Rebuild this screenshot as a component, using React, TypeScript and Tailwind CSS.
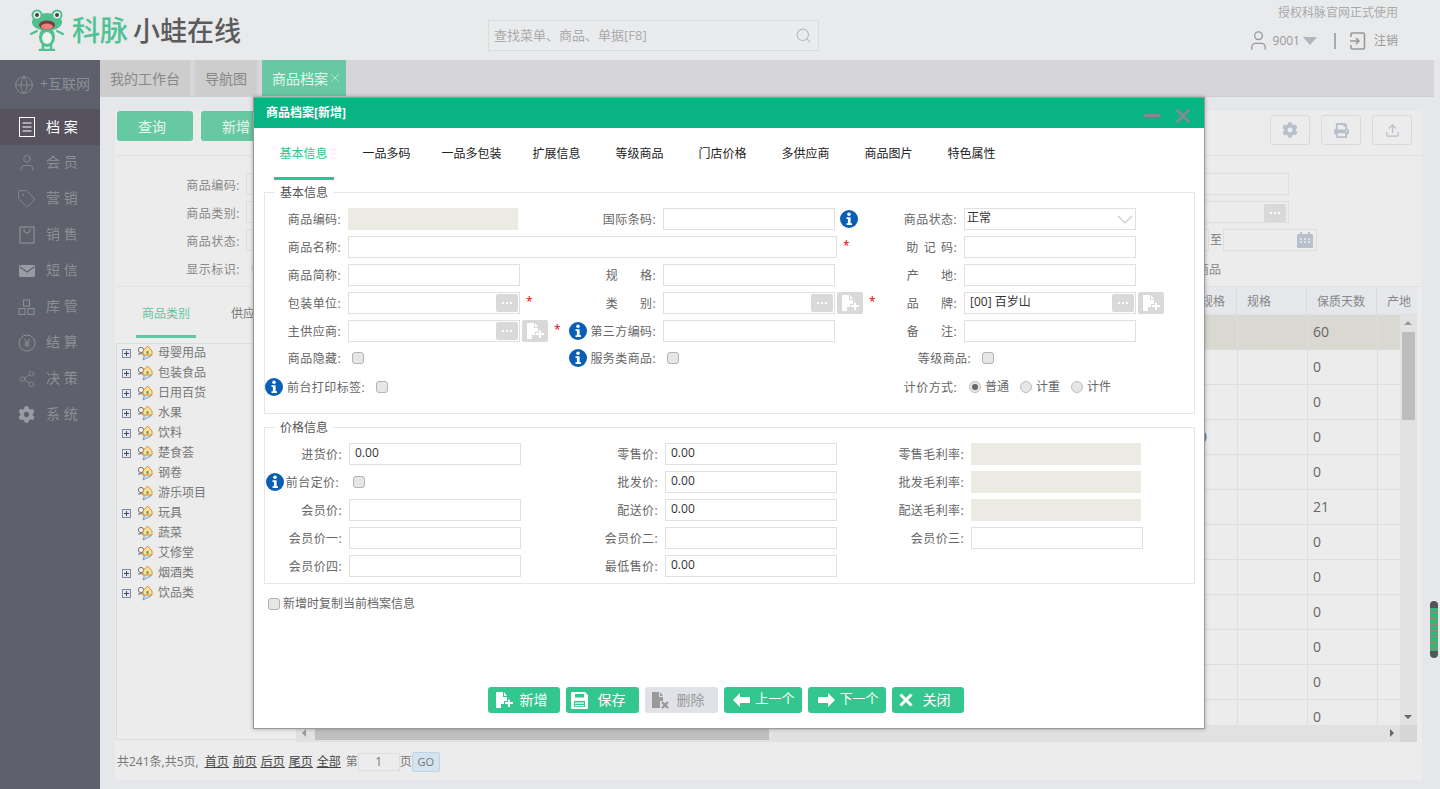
import { FC, ReactNode } from "react";
import { Globe, User, Tag, Share2, Search, Upload, X } from "lucide-react";
import { FaCog, FaPrint } from "react-icons/fa";

const Frog = () => (
  <svg width="34" height="42" viewBox="0 0 34 42">
    <path d="M7 22 L1 25 M27 22 L33 25" stroke="#4fc08f" strokeWidth="2" strokeLinecap="round" />
    <path d="M13 36 L13 41 M21 36 L21 41 M10 41 H16 M18 41 H24" stroke="#4fc08f" strokeWidth="2.5" strokeLinecap="round" />
    <ellipse cx="17" cy="28" rx="8" ry="10" fill="#4fc08f" />
    <ellipse cx="17" cy="29" rx="5" ry="6" fill="#e9f5ef" />
    <ellipse cx="17" cy="13" rx="15" ry="9" fill="#4fc08f" />
    <circle cx="7" cy="6" r="5.5" fill="#4fc08f" />
    <circle cx="27" cy="6" r="5.5" fill="#4fc08f" />
    <circle cx="7" cy="6" r="3.5" fill="#f0f0f0" />
    <circle cx="27" cy="6" r="3.5" fill="#f0f0f0" />
    <circle cx="7" cy="6" r="2" fill="#444" />
    <circle cx="27" cy="6" r="2" fill="#444" />
    <ellipse cx="17" cy="16" rx="8" ry="4.5" fill="#7a3b3b" />
    <ellipse cx="17" cy="17.5" rx="6" ry="3" fill="#ee7f7f" />
  </svg>
);

const Info = () => (
  <svg width="18" height="18" viewBox="0 0 18 18" className="shrink-0">
    <circle cx="9" cy="9" r="9" fill="#0a5fb4" />
    <circle cx="9" cy="4.2" r="1.8" fill="#fff" />
    <path d="M6.5 7.2 H10.6 V13.2 H12 V15 H6.5 V13.2 H7.9 V9 H6.5 Z" fill="#fff" />
  </svg>
);

const FileAdd = ({ color = "#fff" }: { color?: string }) => (
  <svg width="18" height="17" viewBox="0 0 18 17">
    <path d="M1 0 H8 V5 H12 V9 H9 V12 H6 V16 H1 Z M9 0 L12 4 H9 Z" fill={color} />
    <path d="M10 10 H13 V7.5 H15 V10 H18 V12 H15 V15 H13 V12 H10 Z" fill={color} />
  </svg>
);

const FileDel = () => (
  <svg width="18" height="17" viewBox="0 0 18 17">
    <path d="M1 0 H8 V5 H12 V9 H9 V16 H1 Z M9 0 L12 4 H9 Z" fill="#999" />
    <path d="M11 10 L17 16 M17 10 L11 16" stroke="#999" strokeWidth="2.4" />
  </svg>
);

const Floppy = () => (
  <svg width="17" height="17" viewBox="0 0 17 17">
    <path d="M0 1 Q0 0 1 0 H14 L17 3 V16 Q17 17 16 17 H1 Q0 17 0 16 Z" fill="#fff" />
    <rect x="4" y="2" width="9" height="3.5" fill="#33c78f" />
    <rect x="3" y="9" width="11" height="6" fill="#33c78f" />
    <rect x="4" y="10.5" width="9" height="1.2" fill="#fff" />
    <rect x="4" y="13" width="9" height="1.2" fill="#fff" />
  </svg>
);

const ArrowBtn = ({ left }: { left?: boolean }) => (
  <svg width="17" height="14" viewBox="0 0 17 14">
    <path
      d={left ? "M0 7 L7 0 V4 H17 V10 H7 V14 Z" : "M17 7 L10 0 V4 H0 V10 H10 V14 Z"}
      fill="#fff"
    />
  </svg>
);

const Dots = () => (
  <span className="absolute right-[2px] top-[2px] flex h-[18px] w-[22px] items-center justify-center gap-[2px] rounded-[2px] bg-[#d9d9d9]">
    <i className="h-[2px] w-[2px] bg-white" />
    <i className="h-[2px] w-[2px] bg-white" />
    <i className="h-[2px] w-[2px] bg-white" />
  </span>
);

const AddBtn = () => (
  <span className="ml-[2px] flex h-[22px] w-[26px] shrink-0 items-center justify-center rounded-[2px] bg-[#d9d9d9]">
    <FileAdd />
  </span>
);

const Req = () => <span className="mb-[3px] ml-[6px] shrink-0 text-[#e60000]">*</span>;

const Check = ({ className = "" }: { className?: string }) => (
  <input
    type="checkbox"
    className={`h-[12px] w-[12px] appearance-none rounded-[3px] border border-[#b4b4b4] bg-[#e6e6e6] ${className}`}
  />
);

const Radio = ({ on }: { on?: boolean }) => (
  <span className="flex h-[12px] w-[12px] items-center justify-center rounded-full border border-[#bdbdbd] bg-[#e6e6e6]">
    {on && <i className="h-[6px] w-[6px] rounded-full bg-[#666]" />}
  </span>
);

const Box = ({
  value,
  className = "w-[172px]",
  inputClass = "px-[5px]",
  dots,
}: {
  value?: string;
  className?: string;
  inputClass?: string;
  dots?: boolean;
}) => (
  <span className={`relative block h-[22px] shrink-0 ${className}`}>
    <input
      readOnly
      value={value ?? ""}
      className={`h-full w-full border border-[#e0e0e0] bg-white pb-[4px] text-[12px] text-[#333] outline-none ${inputClass}`}
    />
    {dots && <Dots />}
  </span>
);

const Grey = ({ className = "w-[170px]" }: { className?: string }) => (
  <span className={`block h-[22px] bg-[#ebebe4] ${className}`} />
);

const Spaced = ({ a, b }: { a: string; b: string }) => (
  <>
    <span className="mr-[22px]">{a}</span>
    {b}
  </>
);

const Field: FC<{
  label: ReactNode;
  lw?: string;
  gap?: string;
  children: ReactNode;
  icon?: boolean;
}> = ({ label, lw = "w-[103px]", gap = "gap-[3px]", children, icon }) => (
  <div className="flex h-full items-center">
    <label className={`flex shrink-0 items-center justify-end whitespace-nowrap pr-[7px] tracking-[0.4px] text-[#666] ${gap} ${lw}`}>
      {icon && <Info />}
      <span className="pt-[2px]">{label}</span>
    </label>
    {children}
  </div>
);

const Doc = () => (
  <svg width="16" height="20" viewBox="0 0 16 20" fill="none" stroke="#fff" strokeWidth="1">
    <rect x="0.5" y="0.5" width="15" height="19" />
    <path d="M3.5 6 H12.5 M3.5 10 H12.5 M3.5 14 H12.5" />
  </svg>
);

const Bag = () => (
  <svg width="16" height="18" viewBox="0 0 16 18" fill="none" stroke="#8d8f96" strokeWidth="1.2">
    <rect x="1" y="1" width="14" height="16" />
    <path d="M5 3 V5 Q8 9 11 5 V3" />
  </svg>
);

const Mail = () => (
  <svg width="16" height="12" viewBox="0 0 16 12">
    <rect width="16" height="12" rx="1.5" fill="#9a9ca3" />
    <path d="M1 2 L8 7 L15 2" fill="none" stroke="#5e606b" strokeWidth="1.3" />
  </svg>
);

const Blocks = () => (
  <svg width="17" height="16" viewBox="0 0 17 16" fill="none" stroke="#8d8f96" strokeWidth="1.1">
    <rect x="5.5" y="1" width="6" height="6" />
    <rect x="1" y="9.5" width="6" height="6" />
    <rect x="10" y="9.5" width="6" height="6" />
  </svg>
);

const Yuan = () => (
  <svg width="18" height="18" viewBox="0 0 18 18" fill="none" stroke="#8d8f96" strokeWidth="1">
    <circle cx="9" cy="9" r="8" />
    <path d="M6.3 4.8 L9 8.6 L11.7 4.8 M9 8.6 V13.5 M6.5 9 H11.5 M6.5 11 H11.5" />
  </svg>
);

const NAV: { icon: ReactNode; text: string }[] = [
  { icon: <User size={20} strokeWidth={1} color="#8d8f96" />, text: "会 员" },
  { icon: <Tag size={19} strokeWidth={1} color="#8d8f96" />, text: "营 销" },
  { icon: <Bag />, text: "销 售" },
  { icon: <Mail />, text: "短 信" },
  { icon: <Blocks />, text: "库 管" },
  { icon: <Yuan />, text: "结 算" },
  { icon: <Share2 size={18} strokeWidth={1} color="#8d8f96" />, text: "决 策" },
  { icon: <FaCog size={17} color="#9a9ca3" />, text: "系 统" },
];

const TREE: [string, boolean][] = [
  ["母婴用品", true],
  ["包装食品", true],
  ["日用百货", true],
  ["水果", true],
  ["饮料", true],
  ["楚食荟", true],
  ["钢卷", false],
  ["游乐项目", false],
  ["玩具", true],
  ["蔬菜", false],
  ["艾修堂", false],
  ["烟酒类", true],
  ["饮品类", true],
];

const TreeIcon = () => (
  <svg width="16" height="16" viewBox="0 0 16 16" className="shrink-0">
    <circle cx="4" cy="5" r="2.6" fill="#f4f4f4" stroke="#666" strokeWidth="0.9" />
    <path d="M1 9 Q4 7 7 9 V12 L6 15 L10 13 L14 11 V9 H1 Z" fill="#cfdcec" stroke="#6a7f9a" strokeWidth="0.7" />
    <path d="M6 6 L10.5 1 L15 6 V10 H6 Z" fill="#f7e2a0" stroke="#d98f2b" strokeWidth="1" />
    <rect x="9.5" y="6" width="2" height="3" fill="#7a9a4a" />
  </svg>
);

const PlusBox = () => (
  <span className="relative block h-[9px] w-[9px] border border-[#7b8ba3] bg-[#e6e9ef]">
    <i className="absolute left-[1px] top-[3px] h-px w-[5px] bg-[#445]" />
    <i className="absolute left-[3px] top-[1px] h-[5px] w-px bg-[#445]" />
  </span>
);

const TABS = ["基本信息", "一品多码", "一品多包装", "扩展信息", "等级商品", "门店价格", "多供应商", "商品图片", "特色属性"];
const ROW_VALUES = ["60", "0", "0", "0", "0", "21", "0", "0", "0", "0", "0", "0"];

const Table = () => (
  <div className="relative flex h-full flex-1 flex-col overflow-hidden">
    <div className="flex h-[28px] shrink-0 items-center border-b border-[#dfdfdf] bg-[#e5e7eb] pt-[1px] text-[#888]">
      <div className="flex-1" />
      <div className="w-[70px] border-r border-[#dcdcdc] pl-[10px] leading-[27px]">包装规格</div>
      <div className="w-[70px] border-r border-[#dcdcdc] pl-[10px] leading-[27px]">规格</div>
      <div className="w-[70px] border-r border-[#dcdcdc] pl-[10px] leading-[27px]">保质天数</div>
      <div className="w-[40px] pl-[10px] leading-[27px]">产地</div>
    </div>
    <div className="flex min-h-0 flex-1">
      <div className="min-w-0 flex-1 overflow-hidden">
        {ROW_VALUES.map((v, i) => (
          <div
            key={i}
            className={`flex h-[35px] items-center border-b border-[#dedede] text-[14px] text-[#666] ${
              i === 0 ? "bg-[#d9d9d2]" : ""
            }`}
          >
            <div className="flex-1" />
            <div className="flex h-full w-[70px] items-center border-r border-[#dedede] pb-[2px] pl-[7px]">
              {i === 3 ? "1000" : ""}
            </div>
            <div className="h-full w-[70px] border-r border-[#dedede]" />
            <div className="flex h-full w-[70px] items-center border-r border-[#dedede] pb-[2px] pl-[5px]">{v}</div>
            <div className="h-full w-[22px]" />
          </div>
        ))}
      </div>
      <div className="relative w-[17px] shrink-0 bg-[#e2e2e2]">
        <i className="absolute left-[4px] top-[6px] border-x-[4px] border-b-[4px] border-x-transparent border-b-[#999]" />
        <i className="absolute left-[2px] top-[17px] h-[88px] w-[13px] bg-[#bdbdbd]" />
        <i className="absolute bottom-[6px] left-[4px] border-x-[4px] border-t-[4px] border-x-transparent border-t-[#666]" />
      </div>
    </div>
    <div className="flex h-[17px] shrink-0 bg-[#e1e1e1]">
      <div className="relative flex-1">
        <i className="absolute left-[6px] top-[4px] border-y-[4px] border-r-[4px] border-y-transparent border-r-[#999]" />
        <i className="absolute left-[19px] top-[3px] h-[12px] w-[454px] bg-[#c0c0c0]" />
        <i className="absolute right-[6px] top-[4px] border-y-[4px] border-l-[4px] border-y-transparent border-l-[#666]" />
      </div>
      <div className="w-[17px] bg-[#d6d6d6]" />
    </div>
  </div>
);

const Modal = () => (
  <div className="absolute left-[253px] top-[97px] flex h-[632px] w-[952px] flex-col border border-[#9a9a9a] bg-white text-[12px] shadow-[0_0_4px_rgba(0,0,0,0.3)]">
    <div className="flex h-[30px] shrink-0 items-center justify-between bg-[#08b384] pl-[12px] pr-[13px]">
      <span className="font-bold text-white">商品档案[新增]</span>
      <div className="mt-[5px] flex items-center gap-[15px]">
        <i className="h-[3px] w-[16px] bg-[#7f8c94]" />
        <svg width="16" height="16" viewBox="0 0 16 16">
          <path d="M1.5 1.5 L14.5 14.5 M14.5 1.5 L1.5 14.5" stroke="#7f8c94" strokeWidth="3" />
        </svg>
      </div>
    </div>
    <div className="flex h-[52px] shrink-0 pl-[8px]">
      {TABS.map((t, i) => (
        <div
          key={t}
          className={`relative flex h-full items-center justify-center ${i === 2 ? "w-[87px]" : "w-[83px]"} ${
            i === 0 ? "text-[#2fc48d]" : "text-[#222]"
          }`}
        >
          {t}
          {i === 0 && <i className="absolute bottom-0 left-[12px] h-[3px] w-[60px] bg-[#2fc48d]" />}
        </div>
      ))}
    </div>

    <fieldset className="ml-[10px] mt-[4px] w-[931px] border border-[#e6e6e6] pb-[13px] pt-[8px]">
      <legend className="ml-[10px] h-[16px] px-[5px] leading-[18px] text-[#555]">基本信息</legend>
      <div className="grid grid-cols-[295px_301px_1fr] grid-rows-[repeat(5,22px)_20px_26px] gap-y-[6px]">
        <Field label="商品编码:" lw="w-[83px]">
          <Grey />
        </Field>
        <Field label="国际条码:">
          <Box />
          <span className="ml-[5px]">
            <Info />
          </span>
        </Field>
        <Field label="商品状态:">
          <span className="relative block">
            <Box value="正常" inputClass="px-[2px]" />
            <svg width="16" height="9" viewBox="0 0 16 9" className="absolute right-[3px] top-[7px]">
              <path d="M1 1 L8 8 L15 1" fill="none" stroke="#ccc" strokeWidth="1.2" />
            </svg>
          </span>
        </Field>

        <div className="col-span-2">
          <Field label="商品名称:" lw="w-[83px]">
            <Box className="w-[489px]" />
            <Req />
          </Field>
        </div>
        <Field
          label={
            <>
              <span className="mr-[5px]">助</span>
              <span className="mr-[5px]">记</span>码:
            </>
          }
        >
          <Box />
        </Field>

        <Field label="商品简称:" lw="w-[83px]">
          <Box />
        </Field>
        <Field label={<Spaced a="规" b="格:" />}>
          <Box />
        </Field>
        <Field label={<Spaced a="产" b="地:" />}>
          <Box />
        </Field>

        <Field label="包装单位:" lw="w-[83px]">
          <Box dots />
          <Req />
        </Field>
        <Field label={<Spaced a="类" b="别:" />}>
          <Box dots />
          <AddBtn />
          <Req />
        </Field>
        <Field label={<Spaced a="品" b="牌:" />}>
          <Box dots value="[00] 百岁山" />
          <AddBtn />
        </Field>

        <Field label="主供应商:" lw="w-[83px]">
          <Box dots />
          <AddBtn />
          <Req />
        </Field>
        <Field label="第三方编码:" icon>
          <Box />
        </Field>
        <Field label={<Spaced a="备" b="注:" />}>
          <Box />
        </Field>

        <Field label="商品隐藏:" lw="w-[83px]">
          <Check className="ml-[4px]" />
        </Field>
        <Field label="服务类商品:" icon>
          <Check className="ml-[4px]" />
        </Field>
        <Field label="等级商品:" lw="w-[117px]">
          <Check className="ml-[4px]" />
        </Field>

        <Field label="前台打印标签:" lw="w-[107px]" gap="gap-[4px]" icon>
          <Check className="ml-[4px]" />
        </Field>
        <div />
        <Field label="计价方式:">
          <div className="ml-[5px] flex items-center text-[#666]">
            <Radio on />
            <span className="ml-[4px] mr-[11px]">普通</span>
            <Radio />
            <span className="ml-[4px] mr-[11px]">计重</span>
            <Radio />
            <span className="ml-[4px]">计件</span>
          </div>
        </Field>
      </div>
    </fieldset>

    <fieldset className="ml-[10px] mt-[5px] w-[931px] border border-[#e6e6e6] pb-[6px] pt-[8px]">
      <legend className="ml-[10px] h-[16px] px-[5px] leading-[18px] text-[#555]">价格信息</legend>
      <div className="grid grid-cols-[296px_306px_1fr] grid-rows-[repeat(5,22px)] gap-y-[6px]">
        <Field label="进货价:" lw="w-[84px]">
          <Box value="0.00" />
        </Field>
        <Field label="零售价:" lw="w-[104px]">
          <Box value="0.00" />
        </Field>
        <Field label="零售毛利率:" lw="w-[104px]">
          <Grey />
        </Field>

        <Field label={<span className="mr-[4px]">前台定价:</span>} lw="w-[85px]" gap="gap-[2px]" icon>
          <Check className="ml-[3px]" />
        </Field>
        <Field label="批发价:" lw="w-[104px]">
          <Box value="0.00" />
        </Field>
        <Field label="批发毛利率:" lw="w-[104px]">
          <Grey />
        </Field>

        <Field label="会员价:" lw="w-[84px]">
          <Box />
        </Field>
        <Field label="配送价:" lw="w-[104px]">
          <Box value="0.00" />
        </Field>
        <Field label="配送毛利率:" lw="w-[104px]">
          <Grey />
        </Field>

        <Field label="会员价一:" lw="w-[84px]">
          <Box />
        </Field>
        <Field label="会员价二:" lw="w-[104px]">
          <Box />
        </Field>
        <Field label="会员价三:" lw="w-[104px]">
          <Box />
        </Field>

        <Field label="会员价四:" lw="w-[84px]">
          <Box />
        </Field>
        <Field label="最低售价:" lw="w-[104px]">
          <Box value="0.00" />
        </Field>
        <div />
      </div>
    </fieldset>

    <label className="ml-[14px] mt-[11px] flex items-center gap-[3px] text-[#666]">
      <Check />
      新增时复制当前档案信息
    </label>

    <div className="mt-auto flex justify-center gap-[6px] pb-[15px] pr-[7px] text-[14px] text-white">
      <button className="flex h-[26px] w-[72px] items-center gap-[7px] rounded-[3px] bg-[#33c78f] pl-[7px]">
        <FileAdd />
        <span className="mb-[2px]">新增</span>
      </button>
      <button className="flex h-[26px] w-[73px] items-center gap-[10px] rounded-[3px] bg-[#33c78f] pl-[5px]">
        <Floppy />
        <span className="mb-[2px]">保存</span>
      </button>
      <button className="flex h-[26px] w-[73px] items-center gap-[8px] rounded-[3px] bg-[#e0e2e7] pl-[6px] text-[#999]">
        <FileDel />
        <span className="mb-[2px]">删除</span>
      </button>
      <button className="flex h-[26px] w-[78px] items-center gap-[6px] rounded-[3px] bg-[#33c78f] pl-[9px] text-[13px]">
        <ArrowBtn left />
        <span className="mb-[2px]">上一个</span>
      </button>
      <button className="flex h-[26px] w-[78px] items-center gap-[5px] rounded-[3px] bg-[#33c78f] pl-[10px] text-[13px]">
        <ArrowBtn />
        <span className="mb-[2px]">下一个</span>
      </button>
      <button className="flex h-[26px] w-[72px] items-center gap-[10px] rounded-[3px] bg-[#33c78f] pl-[7px]">
        <svg width="14" height="14" viewBox="0 0 14 14">
          <path d="M1.5 1.5 L12.5 12.5 M12.5 1.5 L1.5 12.5" stroke="#fff" strokeWidth="3" />
        </svg>
        <span className="mb-[2px]">关闭</span>
      </button>
    </div>
  </div>
);

const FilterLabel = ({ children }: { children: ReactNode }) => (
  <span className="w-[125px] pt-[3px] text-right tracking-[0.5px]">{children}</span>
);

export default function App() {
  return (
    <div className="relative flex h-[789px] w-[1440px] flex-col overflow-hidden bg-[#e6e7ea] font-['Open_Sans','Noto_Sans_CJK_SC',sans-serif] text-[12px]">
      <header className="flex h-[60px] shrink-0 items-center bg-[#e9eaec]">
        <div className="ml-[30px] flex w-[458px] shrink-0 items-center">
          <Frog />
          <span className="ml-[8px] text-[28px] font-medium leading-none text-[#50c294]">科脉</span>
          <span className="ml-[5px] text-[27px] font-medium leading-none text-[#5b5b5b]">小蛙在线</span>
        </div>
        <div className="mt-[11px] flex h-[31px] w-[331px] items-center justify-between border border-[#dcdcdc] bg-[#eaebed] pl-[5px] pr-[6px] text-[13px] text-[#aaa]">
          查找菜单、商品、单据[F8]
          <Search size={17} strokeWidth={1.5} color="#bbb" />
        </div>
        <div className="ml-auto mr-[42px] flex flex-col items-end text-[#aaa]">
          <span className="mb-[7px] mt-[-4px]">授权科脉官网正式使用</span>
          <div className="flex items-center">
            <User size={23} strokeWidth={1.4} color="#999" />
            <span className="ml-[3px] text-[12px] text-[#999]">9001</span>
            <i className="ml-[3px] border-x-[7px] border-t-[8px] border-x-transparent border-t-[#b0b6bd]" />
            <i className="ml-[17px] mr-[13px] h-[16px] w-[2px] bg-[#aaa]" />
            <svg width="17" height="18" viewBox="0 0 17 18" fill="none" stroke="#999" strokeWidth="1.6">
              <path d="M2 5 V2 Q2 1 3 1 H14 Q15.5 1 15.5 2.5 V15.5 Q15.5 17 14 17 H3 Q2 17 2 16 V13" />
              <path d="M1 9 H10 M7 6 L10 9 L7 12" />
            </svg>
            <span className="ml-[8px] text-[#999]">注销</span>
          </div>
        </div>
      </header>

      <div className="flex min-h-0 flex-1">
        <aside className="flex w-[100px] shrink-0 flex-col bg-[#5e606b] text-[14px] text-[#8d8f96]">
          <div className="flex h-[49px] items-center pl-[14px]">
            <Globe size={20} strokeWidth={1} color="#8d8f96" />
            <span className="mb-[2px] ml-[6px]">+互联网</span>
          </div>
          <div className="flex h-[36px] items-center bg-[#56535e] text-white">
            <span className="flex w-[46px] justify-center pl-[8px]">
              <Doc />
            </span>
            <span className="mb-[2px]">档 案</span>
          </div>
          {NAV.map((n) => (
            <div key={n.text} className="flex h-[36px] items-center pb-[1px]">
              <span className="flex w-[46px] justify-center pl-[7px]">{n.icon}</span>
              <span className="mb-[3px]">{n.text}</span>
            </div>
          ))}
        </aside>

        <main className="flex min-w-0 flex-1 flex-col">
          <nav className="mr-[6px] flex h-[37px] shrink-0 gap-[5px] border-b border-[#cfcfd2] bg-[#d6d6da] text-[14px] text-[#888]">
            <div className="flex w-[90px] items-center justify-center bg-[#cdcdcd]">我的工作台</div>
            <div className="flex w-[62px] items-center justify-center bg-[#cdcdcd]">导航图</div>
            <div className="flex w-[84px] items-center bg-[#68c8a3] pl-[10px] text-[#e4f4ee]">
              商品档案
              <X size={14} strokeWidth={1} />
            </div>
          </nav>

          <div className="ml-[15px] mt-[14px] flex w-[1307px] flex-col self-start bg-[#ececec] text-[#888]">
            <div className="flex h-[45px] shrink-0 items-start border-b border-[#e2e2e2] pl-[2px] pr-[10px]">
              <button className="h-[30px] w-[76px] rounded-[3px] bg-[#66c9a3] pr-[6px] text-[14px] text-[#e8f5f0]">查询</button>
              <button className="ml-[8px] h-[30px] w-[76px] rounded-[3px] bg-[#66c9a3] pr-[6px] text-[14px] text-[#e8f5f0]">新增</button>
              <div className="ml-auto mt-[4px] flex gap-[11px]">
                <span className="flex h-[30px] w-[40px] items-center justify-center rounded-[3px] border border-[#dadada]">
                  <FaCog size={16} color="#b8c0cc" />
                </span>
                <span className="flex h-[30px] w-[40px] items-center justify-center rounded-[3px] border border-[#dadada]">
                  <FaPrint size={15} color="#b8c0cc" />
                </span>
                <span className="flex h-[30px] w-[40px] items-center justify-center rounded-[3px] border border-[#dadada]">
                  <Upload size={15} strokeWidth={2} color="#b8c0cc" />
                </span>
              </div>
            </div>

            <div className="flex h-[131px] shrink-0 flex-col gap-[6px] border-b border-[#e2e2e2] pt-[17px]">
              <div className="flex h-[22px] items-center">
                <FilterLabel>商品编码:</FilterLabel>
                <span className="ml-[6px] h-[22px] w-[100px] border border-[#dedede]" />
                <span className="ml-auto mr-[133px] h-[22px] w-[200px] border border-[#dedede]" />
              </div>
              <div className="flex h-[22px] items-center">
                <FilterLabel>商品类别:</FilterLabel>
                <span className="ml-[6px] h-[22px] w-[100px] border border-[#dedede]" />
                <span className="relative ml-auto mr-[133px] h-[22px] w-[200px] border border-[#dedede]">
                  <Dots />
                </span>
              </div>
              <div className="flex h-[22px] items-center">
                <FilterLabel>商品状态:</FilterLabel>
                <span className="ml-[6px] h-[22px] w-[100px] border border-[#dedede]" />
                <span className="ml-auto h-[22px] w-[60px] border border-[#dedede]" />
                <span className="mx-[1px] text-[#777]">至</span>
                <span className="mr-[105px] flex h-[22px] w-[94px] items-center justify-end border border-[#dedede] pr-[3px]">
                  <svg width="16" height="16" viewBox="0 0 16 16">
                    <rect y="2" width="16" height="14" rx="1.5" fill="#b8c0cc" />
                    <rect x="3" y="0" width="2" height="3" fill="#b8c0cc" />
                    <rect x="11" y="0" width="2" height="3" fill="#b8c0cc" />
                    <path d="M3 7 H5 M7 7 H9 M11 7 H13 M3 10 H5 M7 10 H9 M11 10 H13" stroke="#ececec" strokeWidth="1.6" />
                  </svg>
                </span>
              </div>
              <div className="flex h-[22px] items-center">
                <FilterLabel>显示标识:</FilterLabel>
                <span className="ml-[11px] block h-[8px] w-[8px] rounded-full border border-[#ccc]" />
                <span className="ml-auto mr-[201px] pt-[3px]">商品</span>
              </div>
            </div>

            <div className="flex h-[455px] pr-[5px]">
              <div className="flex w-[181px] shrink-0 flex-col">
                <div className="flex h-[57px] shrink-0 border-b border-[#dddddd]">
                  <div className="relative flex h-full w-[116px] items-center justify-center pb-[2px] pr-[14px] text-[#5fc8a0]">
                    商品类别
                    <i className="absolute bottom-[5px] left-[21px] h-[3px] w-[60px] bg-[#5fc8a0]" />
                  </div>
                  <div className="flex h-full items-center pb-[2px] text-[#777]">供应商</div>
                </div>
                <div className="mb-[2px] ml-px flex-1 border-b border-l border-[#dcdcdc] pl-[5px] text-[#777]">
                  <div className="-mt-px">
                    {TREE.map(([name, plus]) => (
                      <div key={name} className="flex h-[20px] items-center">
                        <span className="w-[15px] shrink-0">{plus && <PlusBox />}</span>
                        <TreeIcon />
                        <span className="ml-[5px]">{name}</span>
                      </div>
                    ))}
                  </div>
                </div>
              </div>
              <Table />
            </div>

            <div className="mt-[1px] flex h-[37px] items-center pl-[2px] pt-[1px] text-[#777]">
              共241条,共5页,
              <div className="ml-[6px] flex gap-[4px] text-[#444] underline">
                <a>首页</a>
                <a>前页</a>
                <a>后页</a>
                <a>尾页</a>
                <a>全部</a>
              </div>
              <span className="ml-[5px]">第</span>
              <span className="flex h-[18px] w-[42px] items-center justify-center border border-[#dedede]">1</span>
              <span>页</span>
              <span className="flex h-[20px] w-[28px] items-center justify-center rounded-[2px] border border-[#bdd4e8] bg-[#d5e3ee] text-[11px]">
                GO
              </span>
            </div>
          </div>
        </main>
      </div>

      <Modal />

      <div className="absolute left-[1430px] top-[601px] h-[57px] w-[8px] rounded-[4px] bg-[#555] py-[7px]">
        <div className="h-full w-full bg-[repeating-linear-gradient(0deg,#38b36d_0,#38b36d_2px,#8a8a8a_2px,#8a8a8a_3px)]" />
      </div>
    </div>
  );
}
